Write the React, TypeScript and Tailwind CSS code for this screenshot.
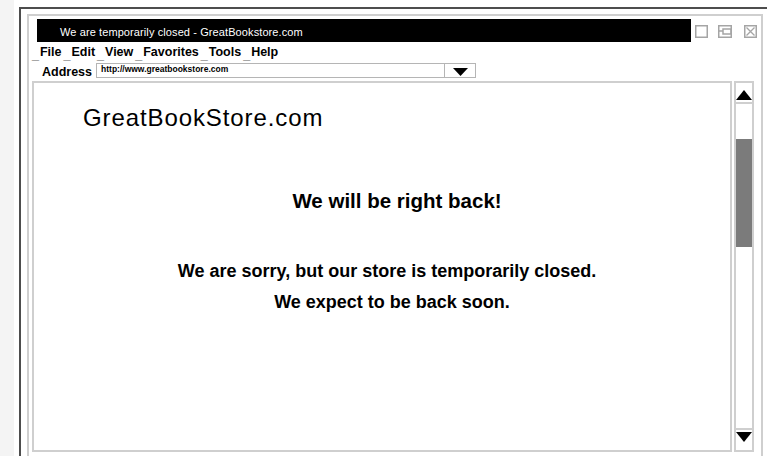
import React from 'react';

// Little gray mnemonic marks that sit before each menu word
const menuItems = ['File', 'Edit', 'View', 'Favorites', 'Tools', 'Help'];

const WindowButtons: React.FC = () => (
  <div className="flex items-start pl-[4px] pr-[4px] pt-[6px]">
    {/* minimize */}
    <svg width="13" height="13" viewBox="0 0 13 13">
      <rect x="0.75" y="0.75" width="11.5" height="11.5" fill="none" stroke="#a5a5a5" strokeWidth="1.5" />
    </svg>
    {/* restore */}
    <svg width="14" height="13" viewBox="0 0 14 13" className="ml-[10px]">
      <rect x="0.75" y="0.75" width="12.5" height="11.5" fill="none" stroke="#a5a5a5" strokeWidth="1.5" />
      <rect x="5" y="4" width="8" height="5" fill="none" stroke="#a5a5a5" strokeWidth="1.5" />
      <line x1="1" y1="6" x2="5" y2="6" stroke="#a5a5a5" strokeWidth="1.5" />
    </svg>
    {/* close */}
    <svg width="13" height="13" viewBox="0 0 13 13" className="ml-[12px]">
      <rect x="0.75" y="0.75" width="11.5" height="11.5" fill="none" stroke="#a5a5a5" strokeWidth="1.5" />
      <path d="M2.5 2.5 L10.5 10.5 M10.5 2.5 L2.5 10.5" stroke="#a5a5a5" strokeWidth="1.3" />
    </svg>
  </div>
);

const Scrollbar: React.FC = () => (
  <div className="flex w-[20px] flex-col border-2 border-[#cfcfcf]">
    {/* up arrow */}
    <div className="flex h-[21px] items-end justify-center border-b-2 border-[#cfcfcf] pb-[2px]">
      <svg width="16" height="10" viewBox="0 0 16 10">
        <path d="M8 0 L16 10 L0 10 Z" fill="#000" />
      </svg>
    </div>
    <div className="h-[35px]" />
    {/* thumb */}
    <div className="h-[108px] bg-[#7b7b7b]" />
    <div className="flex-1" />
    {/* down arrow */}
    <div className="flex h-[22px] items-start justify-center border-t-2 border-[#cfcfcf] pt-[2px]">
      <svg width="16" height="10" viewBox="0 0 16 10">
        <path d="M0 0 L16 0 L8 10 Z" fill="#000" />
      </svg>
    </div>
  </div>
);

export default function App() {
  return (
    <div className="flex h-[456px] w-[767px] overflow-hidden bg-white font-['Liberation_Sans',Arial,sans-serif] text-black">
      <div className="w-[14px] shrink-0 bg-[#f4f4f4]" />
      <div className="ml-[5px] mt-[7px] flex flex-1 border-l-2 border-t-2 border-[#4d4d4d] pl-[6px] pr-[4px] pt-[5px]">
        <div className="flex flex-1 flex-col border-x-2 border-t-2 border-[#cfcfcf] pl-[3px] pt-[3px]">
          {/* title bar */}
          <div className="flex h-[23px]">
            <div className="ml-[5px] flex-1 bg-black pl-[23px] pt-[8px] text-[11px] leading-none tracking-[0.1px] text-white">
              We are temporarily closed - GreatBookstore.com
            </div>
            <WindowButtons />
          </div>

          {/* menu bar */}
          <div className="flex h-[16px] items-end text-[12.5px] font-bold leading-none">
            {menuItems.map((item) => (
              <span key={item} className="flex items-end">
                <span className="mr-[1px] mb-[-2px] text-[#9d9d9d] font-normal">_</span>
                <span className="mr-[2px]">{item}</span>
              </span>
            ))}
          </div>

          {/* address row */}
          <div className="mt-[4px] flex h-[17px] items-start">
            <span className="ml-[10px] pt-[4px] text-[12.5px] font-bold leading-none">Address</span>
            <div className="ml-[4px] mt-[1px] flex h-[15px] w-[380px] border border-[#b5b5b5]">
              <div className="flex-1 border-r border-[#b5b5b5] pl-[4px] pt-[1px] text-[8.5px] font-bold leading-none">
                http://www.greatbookstore.com
              </div>
              <div className="flex w-[30px] items-center justify-center pt-[2px]">
                <svg width="15" height="8" viewBox="0 0 15 8">
                  <path d="M0 0 L15 0 L7.5 8 Z" fill="#000" />
                </svg>
              </div>
            </div>
          </div>

          {/* page area */}
          <div className="mt-[2px] flex flex-1 gap-[2px] pb-[4px] pr-[7px]">
            <div className="flex flex-1 flex-col border-2 border-[#cfcfcf]">
              <h1 className="ml-[49px] mt-[23px] text-[24px] leading-none tracking-[0.9px]">GreatBookStore.com</h1>
              <div className="flex flex-col items-center">
                <h2 className="mt-[61px] pl-[30px] text-[20.5px] font-bold leading-none">We will be right back!</h2>
                <p className="mt-[50px] pl-[10px] text-[18px] font-bold leading-none">
                  We are sorry, but our store is temporarily closed.
                </p>
                <p className="mt-[13px] pl-[20px] text-[18px] font-bold leading-none">We expect to be back soon.</p>
              </div>
            </div>
            <Scrollbar />
          </div>
        </div>
      </div>
    </div>
  );
}
